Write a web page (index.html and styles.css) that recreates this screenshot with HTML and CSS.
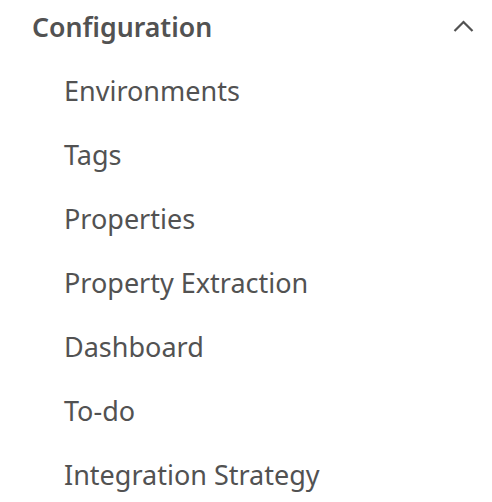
FILE: index.html
```html
<!DOCTYPE html>
<html lang="en">
<head>
<meta charset="utf-8">
<title>Side nav</title>
<link rel="stylesheet" href="styles.css">
</head>
<body>
<nav class="sidenav">
  <button class="menu-header" type="button">
    <span class="menu-title">Configuration</span>
    <svg class="chevron" width="22" height="14" viewBox="0 0 22 14" aria-hidden="true">
      <polyline points="1.5,12 10.5,3 19.5,12" fill="none" stroke="#525252" stroke-width="2.2"/>
    </svg>
  </button>
  <ul class="menu-list">
    <li class="menu-item">Environments</li>
    <li class="menu-item">Tags</li>
    <li class="menu-item">Properties</li>
    <li class="menu-item">Property Extraction</li>
    <li class="menu-item">Dashboard</li>
    <li class="menu-item">To-do</li>
    <li class="menu-item">Integration Strategy</li>
  </ul>
</nav>
</body>
</html>
```
FILE: styles.css
```css
html, body {
  margin: 0;
  padding: 0;
  background: #ffffff;
}
body {
  font-family: "Noto Sans", "Open Sans", sans-serif;
  color: #525252;
  overflow: hidden;
}
.sidenav {
  width: 492px;
  margin-top: -6px;
}
.menu-header {
  display: flex;
  align-items: center;
  justify-content: space-between;
  width: 100%;
  height: 64px;
  padding: 0 17px 0 32px;
  border: 0;
  background: transparent;
  font: inherit;
  color: inherit;
}
.menu-title {
  font-size: 26.7px;
  font-weight: 600;
}
.chevron {
  display: block;
}
.menu-list {
  list-style: none;
  margin: 0;
  padding: 0;
}
.menu-item {
  display: flex;
  align-items: center;
  height: 64px;
  padding-left: 64px;
  font-size: 27px;
  font-weight: 400;
}
```
